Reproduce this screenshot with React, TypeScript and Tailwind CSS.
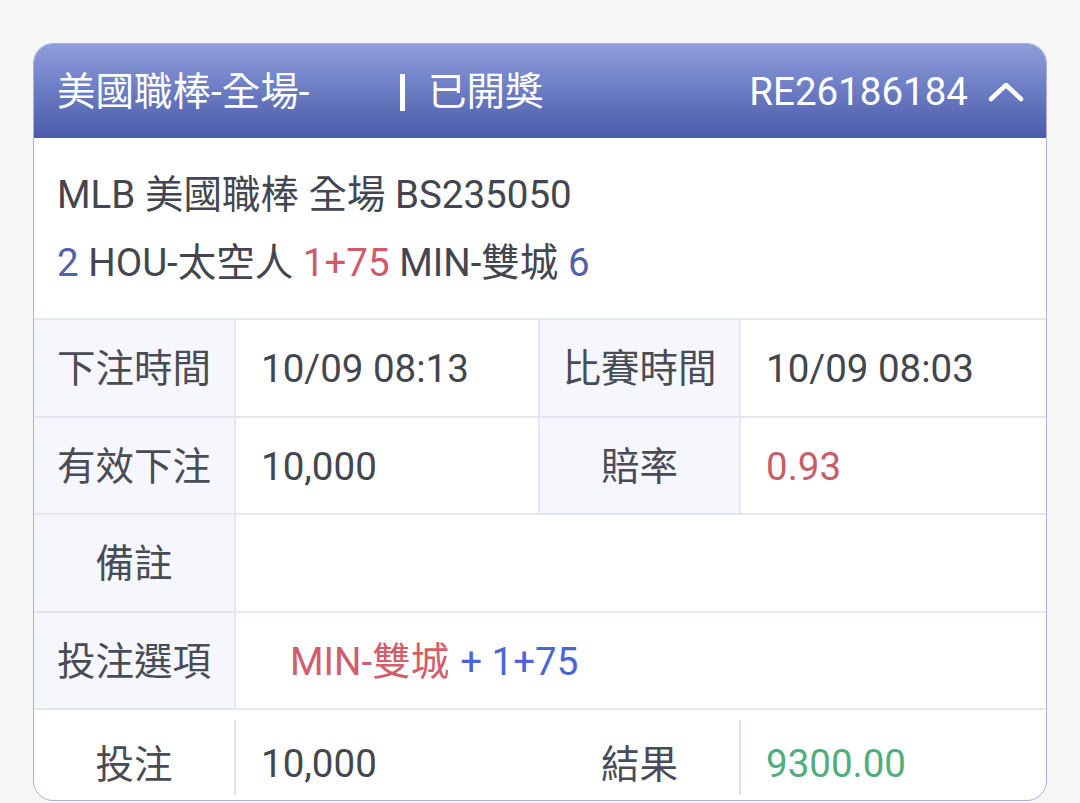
import React from "react";

const font = { fontFamily: 'Roboto, "Noto Sans CJK TC", sans-serif' };

function Label({ children, className = "" }: { children: React.ReactNode; className?: string }) {
  return (
    <div className={`flex items-center justify-center pt-[3px] bg-[#f6f7fc] border-r-2 border-[#e4e7f1] text-[#494c56] ${className}`}>
      {children}
    </div>
  );
}

function Value({ children, className = "" }: { children: React.ReactNode; className?: string }) {
  return <div className={`flex items-center pt-[3px] pl-[25px] ${className}`}>{children}</div>;
}

export default function App() {
  return (
    <div className="min-h-screen bg-[#f6f6f6] pt-[43px] pl-[33px]" style={font}>
      <div className="w-[1014px] h-[758px] rounded-[20px] border-[1.5px] border-[#aab1d3] bg-white overflow-hidden text-[38.5px] text-[#43464f]">
        {/* header */}
        <div className="h-[94px] flex items-center pl-[23px] pr-[22px] pt-[2px] text-white bg-gradient-to-b from-[#8e9ddb] to-[#4b5aa9]">
          <span className="w-[343px] leading-none">美國職棒-全場-</span>
          <span className="w-[5px] h-[37px] bg-white"></span>
          <span className="ml-[23px] leading-none">已開獎</span>
          <span className="ml-auto leading-none">RE26186184</span>
          <svg className="ml-[20px]" width="36" height="20" viewBox="0 0 36 20" fill="none">
            <path d="M3 17 L18 3 L33 17" stroke="white" strokeWidth="4.5" strokeLinecap="round" strokeLinejoin="round" />
          </svg>
        </div>

        {/* info */}
        <div className="h-[180px] pt-[23px] pl-[23px] leading-[68px]">
          <div>MLB 美國職棒 全場 BS235050</div>
          <div>
            <span className="text-[#5161aa]">2</span> HOU-太空人{" "}
            <span className="text-[#cf5b68]">1+75</span> MIN-雙城{" "}
            <span className="text-[#5161aa]">6</span>
          </div>
        </div>

        {/* table */}
        <div className="grid grid-cols-[202px_304px_201px_1fr] grid-rows-[97.5px_97.5px_97.5px_97.5px_91px]">
          <Label className="border-t-2">下注時間</Label>
          <Value className="border-t-2 border-r-2 border-[#e4e7f1]">10/09 08:13</Value>
          <Label className="border-t-2">比賽時間</Label>
          <Value className="border-t-2 border-[#e4e7f1]">10/09 08:03</Value>

          <Label className="border-t-2">有效下注</Label>
          <Value className="border-t-2 border-r-2 border-[#e4e7f1]">10,000</Value>
          <Label className="border-t-2">賠率</Label>
          <Value className="border-t-2 border-[#e4e7f1] text-[#c85e69]">0.93</Value>

          <Label className="border-t-2">備註</Label>
          <Value className="col-span-3 border-t-2 border-[#e4e7f1]">{""}</Value>

          <Label className="border-t-2">投注選項</Label>
          <div className="col-span-3 flex items-center pt-[3px] pl-[54px] border-t-2 border-[#e4e7f1]">
            <span className="text-[#d35d6b]">MIN-雙城</span>
            <span className="ml-[11px] text-[#4a66d6]">+ 1+75</span>
          </div>

          <div className="col-span-4 grid grid-cols-[202px_304px_201px_1fr] border-t-2 border-[#e4e7f1]">
            <div className="mt-[10px] mb-[4px] flex items-center justify-center pt-[14px] border-r-2 border-[#dfe3f0] text-[#494c56]">投注</div>
            <div className="flex items-center pl-[25px] pt-[18px]">10,000</div>
            <div className="mt-[10px] mb-[4px] flex items-center justify-center pt-[14px] border-r-2 border-[#dfe3f0] text-[#494c56]">結果</div>
            <div className="flex items-center pl-[25px] pt-[18px] text-[#4fae7e]">9300.00</div>
          </div>
        </div>
      </div>
    </div>
  );
}
